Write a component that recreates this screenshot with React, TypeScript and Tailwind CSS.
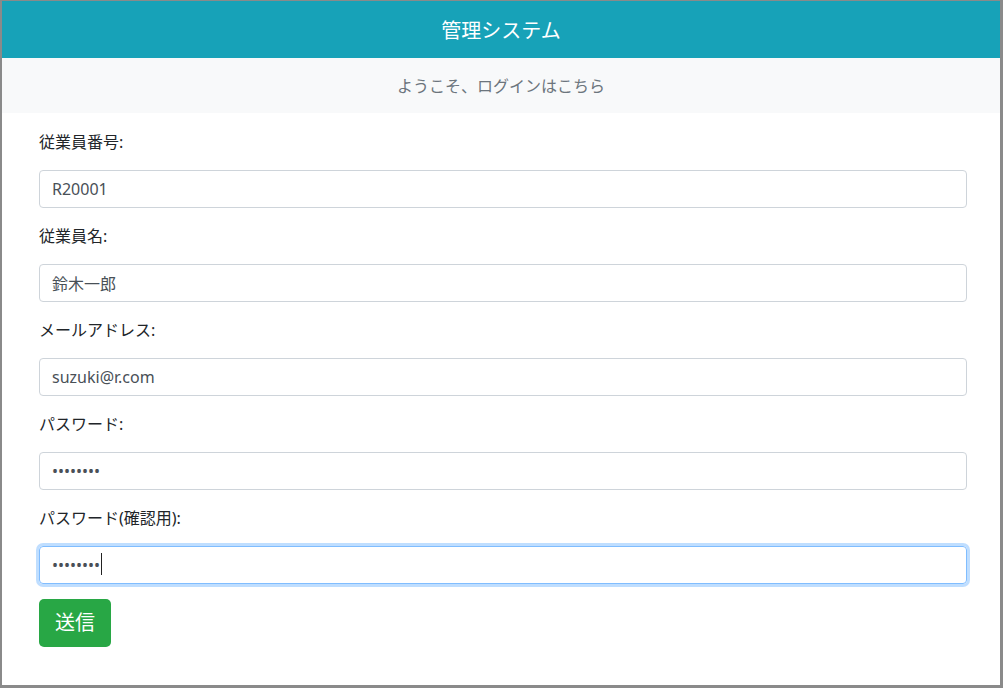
import { useState } from "react";

const fields = [
  { label: "従業員番号:", type: "text", value: "R20001" },
  { label: "従業員名:", type: "text", value: "鈴木一郎" },
  { label: "メールアドレス:", type: "email", value: "suzuki@r.com" },
  { label: "パスワード:", type: "password", value: "password" },
];

export default function App() {
  const [values, setValues] = useState(fields.map((f) => f.value));
  const [confirm, setConfirm] = useState("password");

  return (
    <div
      className="h-[688px] w-[1003px] overflow-hidden border-t border-l-2 border-r-[3px] border-b-[3px] border-[#8a8a8a] bg-white"
      style={{ fontFamily: '"Noto Sans", "Noto Sans CJK JP", sans-serif' }}
    >
      {/* header */}
      <div className="flex h-[57px] items-center justify-center bg-[#17a2b8] pt-[3px] text-[20px] text-white">
        管理システム
      </div>

      {/* sub header */}
      <div className="flex h-[55px] items-center justify-center bg-[#f8f9fa] text-[16px] text-[#6c757d]">
        ようこそ、ログインはこちら
      </div>

      {/* form */}
      <form className="pl-[37px] pr-[33px] pt-[17px]" onSubmit={(e) => e.preventDefault()}>
        {fields.map((f, i) => (
          <div key={f.label} className="mb-4">
            <label className="mb-4 block h-6 text-[16px] leading-6 text-[#212529]">{f.label}</label>
            <input
              type={f.type}
              value={values[i]}
              onChange={(e) => setValues(values.map((v, j) => (j === i ? e.target.value : v)))}
              className="block h-[38px] w-full rounded border border-[#ced4da] px-3 text-[16px] text-[#495057] outline-none"
            />
          </div>
        ))}

        <div className="mb-[15px]">
          <label className="mb-4 block h-6 text-[16px] leading-6 text-[#212529]">パスワード(確認用):</label>
          <div className="relative">
            <input
              type="password"
              value={confirm}
              onChange={(e) => setConfirm(e.target.value)}
              className="block h-[38px] w-full rounded border border-[#80bdff] px-3 text-[16px] text-[#495057] caret-transparent shadow-[0_0_0_3px_rgba(0,123,255,0.25)] outline-none"
            />
            {/* caret */}
            <span className="absolute left-[62px] top-[7px] h-[22px] w-px bg-[#222]" />
          </div>
        </div>

        <button
          type="submit"
          className="h-12 rounded-[5px] bg-[#28a745] px-4 text-[20px] text-white"
        >
          送信
        </button>
      </form>
    </div>
  );
}
